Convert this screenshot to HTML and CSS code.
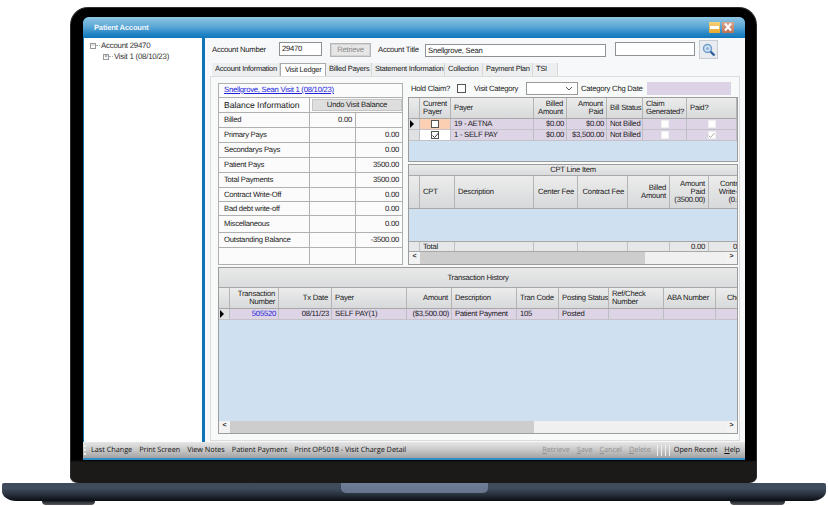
FILE: index.html
```html
<!DOCTYPE html>
<html lang="en">
<head>
<meta charset="utf-8">
<title>Patient Account</title>
<link rel="stylesheet" href="styles.css">
</head>
<body>
<div class="laptop">
  <div class="lid">
    <div class="window">
      <div class="titlebar">
        <span class="title">Patient Account</span>
        <div class="winbtns">
          <span class="winbtn min"><span class="dash"></span></span>
          <span class="winbtn close"><svg width="12" height="10" viewBox="0 0 12 10"><path d="M3 1.5 L9 8.5 M9 1.5 L3 8.5" stroke="#fff" stroke-width="2"/></svg></span>
        </div>
      </div>
      <div class="client">
        <div class="tree">
          <div class="node"><span class="box">−</span><span class="dots"></span>Account 29470</div>
          <div class="node sub"><span class="box">+</span><span class="dots"></span>Visit 1 (08/10/23)</div>
        </div>
        <div class="main">
          <div class="toprow">
            <span class="lbl w67">Account Number</span>
            <span class="input acct">29470</span>
            <span class="btn">Retrieve</span>
            <span class="lbl w47">Account Title</span>
            <span class="input title-in">Snellgrove, Sean</span>
            <span class="input search"></span>
            <span class="searchbtn"><svg width="14" height="14" viewBox="0 0 14 14"><circle cx="5.5" cy="5.5" r="4" fill="#cfe3f5" stroke="#6f9cc8" stroke-width="1.5"/><circle cx="5.5" cy="5.5" r="1.6" fill="#8fb4d8"/><path d="M8.5 8.5 L12.5 12.5" stroke="#2f5f9a" stroke-width="2.4"/></svg></span>
          </div>
          <div class="tabs">
            <span class="tab t1">Account Information</span>
            <span class="tab t2 active">Visit Ledger</span>
            <span class="tab t3">Billed Payers</span>
            <span class="tab t4">Statement Information</span>
            <span class="tab t5">Collection</span>
            <span class="tab t6">Payment Plan</span>
            <span class="tab t7">TSI</span>
          </div>
          <div class="panel">
            <div class="upper">
              <div class="balance">
                <div class="linkrow"><a href="#">Snellgrove, Sean Visit 1 (08/10/23)</a></div>
                <div class="brow head"><span class="bh">Balance Information</span><span class="undo-cell"><span class="undo">Undo Visit Balance</span></span></div>
                <div class="brow"><span>Billed</span><span class="r">0.00</span><span></span></div>
                <div class="brow"><span>Primary Pays</span><span></span><span class="r">0.00</span></div>
                <div class="brow"><span>Secondarys Pays</span><span></span><span class="r">0.00</span></div>
                <div class="brow"><span>Patient Pays</span><span></span><span class="r">3500.00</span></div>
                <div class="brow"><span>Total Payments</span><span></span><span class="r">3500.00</span></div>
                <div class="brow h14"><span>Contract Write-Off</span><span></span><span class="r">0.00</span></div>
                <div class="brow h14"><span>Bad debt write-off</span><span></span><span class="r">0.00</span></div>
                <div class="brow tall"><span>Miscellaneous</span><span></span><span class="r">0.00</span></div>
                <div class="brow"><span>Outstanding Balance</span><span></span><span class="r">-3500.00</span></div>
                <div class="brow last"><span></span><span></span><span></span></div>
              </div>
              <div class="rightcol">
                <div class="holdrow">
                  <span class="lbl w46">Hold Claim?</span>
                  <span class="cb big"></span>
                  <span class="lbl w52">Visit Category</span>
                  <span class="combo"><svg width="8" height="5" viewBox="0 0 8 5"><path d="M1 1 L4 4 L7 1" fill="none" stroke="#555"/></svg></span>
                  <span class="lbl w66">Category Chg Date</span>
                  <span class="datebox"></span>
                </div>
                <div class="grid payers">
                  <div class="gr hdr">
                    <span></span><span><span>Current<br>Payer</span></span><span>Payer</span><span class="r"><span>Billed<br>Amount</span></span><span class="r"><span>Amount<br>Paid</span></span><span>Bill Status</span><span><span>Claim<br>Generated?</span></span><span>Paid?</span>
                  </div>
                  <div class="gr row">
                    <span class="sel"><i class="arrow"></i></span><span class="cen cur"><span class="cb"></span></span><span>19 - AETNA</span><span class="r">$0.00</span><span class="r">$0.00</span><span>Not Billed</span><span class="cen"><span class="cb flat"></span></span><span class="cen"><span class="cb flat"></span></span>
                  </div>
                  <div class="gr row">
                    <span class="sel"></span><span class="cen plain"><span class="cb"><svg width="9" height="9" viewBox="0 0 9 9"><path d="M1.5 4.5 L3.5 6.5 L7.5 2" fill="none" stroke="#333"/></svg></span></span><span>1 - SELF PAY</span><span class="r">$0.00</span><span class="r">$3,500.00</span><span>Not Billed</span><span class="cen"><span class="cb flat"></span></span><span class="cen"><span class="cb flat"><svg width="9" height="9" viewBox="0 0 9 9"><path d="M1.5 4.5 L3.5 6.5 L7.5 2" fill="none" stroke="#aaa"/></svg></span></span>
                  </div>
                  <div class="blue"></div>
                </div>
                <div class="grid cpt">
                  <div class="caption">CPT Line Item</div>
                  <div class="gc hdr">
                    <span></span><span>CPT</span><span>Description</span><span class="r">Center Fee</span><span class="r">Contract Fee</span><span class="r"><span>Billed<br>Amount</span></span><span class="r"><span>Amount<br>Paid<br>(3500.00)</span></span><span class="r"><span>Contract<br>Write-Off<br>(0.00)</span></span>
                  </div>
                  <div class="blue"></div>
                  <div class="gc total">
                    <span></span><span>Total</span><span></span><span></span><span></span><span></span><span class="r">0.00</span><span class="r">0.00</span>
                  </div>
                  <div class="scroll"><span class="sbtn">&lt;</span><span class="thumb t-cpt"></span><span class="sbtn">&gt;</span></div>
                </div>
              </div>
            </div>
            <div class="grid history">
              <div class="caption big">Transaction History</div>
              <div class="gh hdr">
                <span></span><span class="r"><span>Transaction<br>Number</span></span><span class="r">Tx Date</span><span>Payer</span><span class="r">Amount</span><span>Description</span><span>Tran Code</span><span>Posting Status</span><span><span>Ref/Check<br>Number</span></span><span>ABA Number</span><span class="cut">Check</span>
              </div>
              <div class="gh row">
                <span class="sel"><i class="arrow"></i></span><span class="r txn">505520</span><span class="r">08/11/23</span><span>SELF PAY(1)</span><span class="r">($3,500.00)</span><span>Patient Payment</span><span>105</span><span>Posted</span><span></span><span></span><span></span>
              </div>
              <div class="blue"></div>
              <div class="scroll"><span class="sbtn">&lt;</span><span class="thumb t-hist"></span><span class="sbtn">&gt;</span></div>
            </div>
          </div>
        </div>
      </div>
      <div class="statusbar">
        <span class="grip"></span>
        <span class="sitem">Last Change</span>
        <span class="sitem">Print Screen</span>
        <span class="sitem">View Notes</span>
        <span class="sitem">Patient Payment</span>
        <span class="sitem">Print OP5018 - Visit Charge Detail</span>
        <span class="spacer"></span>
        <span class="sitem off"><u>R</u>etrieve</span>
        <span class="sitem off"><u>S</u>ave</span>
        <span class="sitem off"><u>C</u>ancel</span>
        <span class="sitem off"><u>D</u>elete</span>
        <span class="bars"><i></i><i></i><i></i><i></i></span>
        <span class="sitem">Open Recent</span>
        <span class="sitem"><u>H</u>elp</span>
      </div>
    </div>
  </div>
  <div class="base">
    <div class="notch"></div>
  </div>
  <div class="feet"><span class="foot f1"></span><span class="foot f2"></span></div>
</div>
</body>
</html>
```
FILE: styles.css
```css
* { box-sizing: border-box; }
html, body { margin: 0; padding: 0; background: #fff; }
body { width: 828px; height: 506px; overflow: hidden; font: 7.7px "Liberation Sans", Arial, sans-serif; letter-spacing: -.25px; text-rendering: geometricPrecision; color: #1a1a1a; }
.laptop { width: 828px; padding-top: 7px; }
.lid { width: 687px; height: 476px; margin-left: 70px; padding: 10px 11px 0 12px; background: linear-gradient(#000 0, #000 452px, #1b1a19 454px); border-radius: 18px 18px 8px 8px / 18px 18px 6px 6px; border: 1px solid #2a2c2e; border-bottom: 0; }
.window { width: 662px; height: 443px; display: flex; flex-direction: column; background: #0f74b8; border-radius: 6px 6px 0 0; overflow: hidden; margin-top: -1px; border-bottom: 2px solid #2f8cc6; }
.titlebar { height: 21px; flex: none; display: flex; align-items: center; justify-content: space-between; padding: 0 11px 0 11px; background: linear-gradient(#90c7e4 0, #5ea8d6 45%, #2b8ac8 75%, #0f76ba 100%); }
.title { color: #eef6fb; font: bold 7.6px "Liberation Sans", sans-serif; letter-spacing: -.2px; }
.winbtns { display: flex; gap: 2px; margin-top: -1px; }
.winbtn { width: 11px; height: 11px; display: flex; align-items: center; justify-content: center; }
.min { background: linear-gradient(#f6d27a, #e9a92f); }
.dash { width: 9px; height: 3px; background: #fff; }
.close { background: linear-gradient(#dda78e, #bd6f52); width: 12px; }
.client { flex: 1; display: flex; min-height: 0; }
.tree { width: 118px; margin-left: 1px; background: #fff; padding: 2px 6px; flex: none; font-size: 7.9px; color: #333; }
.node { height: 11px; display: flex; align-items: center; }
.node.sub { margin-left: 13px; }
.box { width: 6px; height: 6px; border: 1px solid #999; font-size: 6px; line-height: 4px; text-align: center; color: #555; flex: none; overflow: hidden; }
.dots { width: 4px; border-top: 1px dotted #aaa; margin-right: 1px; flex: none; }
.main { width: 540px; margin-left: 3px; background: #f7f8f9; padding: 0 0 0 7px; display: flex; flex-direction: column; }
.toprow { height: 25px; flex: none; display: flex; align-items: flex-start; padding-top: 4px; }
.lbl { white-space: nowrap; flex: none; }
.toprow .lbl { margin-top: 3px; }
.w67 { width: 67px; }
.w47 { width: 47px; }
.w46 { width: 46px; }
.w52 { width: 52px; }
.w66 { width: 66px; }
.input { height: 14px; background: #fff; border: 1px solid #8e9295; padding: 0 2px; line-height: 11px; flex: none; }
.acct { width: 43px; }
.btn { width: 41px; height: 14px; margin: 1px 7px 0 8px; background: #e6e6e6; border: 1px solid #b6b6b6; outline: 1px solid #d4d4d4; outline-offset: -2px; color: #8a8a8a; text-align: center; line-height: 12px; }
.title-in { width: 181px; height: 13px; margin-top: 2px; margin-right: 9px; }
.search { width: 80px; margin-right: 4px; }
.searchbtn { width: 19px; height: 19px; background: #e8ecf0; border: 1px solid #c6ccd0; display: flex; align-items: center; justify-content: center; margin-top: -2px; }
.tabs { height: 13px; flex: none; display: flex; align-items: flex-end; font-size: 7.5px; }
.tab { height: 13px; background: #eceef0; padding-left: 3px; line-height: 12px; border-right: 1px solid #d8d8d8; white-space: nowrap; overflow: hidden; flex: none; }
.tab.active { background: #fff; border: 1px solid #aaa; border-bottom: 0; line-height: 11px; padding-left: 4px; }
.t1 { width: 68px; } .t2 { width: 46px; } .t3 { width: 46px; } .t4 { width: 73px; } .t5 { width: 38px; } .t6 { width: 50px; } .t7 { width: 25px; }
.panel { width: 530px; height: 365px; margin-left: -2px; background: #f8f9f9; border: 1px solid #dcdcdc; padding: 4px 0 0 7px; display: flex; flex-direction: column; gap: 2px; }
.upper { display: flex; gap: 5px; height: 184px; flex: none; }
.balance { width: 185px; margin-top: 2px; height: 182px; border: 1px solid #b0b0b0; background: #fbfbfb; display: flex; flex-direction: column; }
.linkrow { height: 14px; padding-left: 5px; line-height: 12px; border-bottom: 1px solid #b0b0b0; flex: none; }
.linkrow a { color: #2222dd; }
.brow { height: 15px; flex: none; display: grid; grid-template-columns: 91px 46px 1fr; border-bottom: 1px solid #b0b0b0; align-items: stretch; line-height: 14px; }
.brow > span { border-right: 1px solid #b0b0b0; padding: 0 3px 0 5px; white-space: nowrap; }
.brow > span:last-child { border-right: 0; }
.brow.head { grid-template-columns: 91px 1fr; }
.brow.h14 { height: 14px; line-height: 13px; }
.brow.tall { height: 17px; line-height: 16px; }
.brow.last { height: 17px; border-bottom: 0; }
.bh { font-size: 8.6px; letter-spacing: -.05px; }
.brow .undo-cell { padding: 1px 0 1px 2px; }
.undo { display: block; height: 12px; background: #dedede; border: 1px solid #c4c4c4; text-align: center; line-height: 10px; }
.r { text-align: right; }
.rightcol { width: 330px; display: flex; flex-direction: column; }
.holdrow { height: 14px; margin-bottom: 2px; flex: none; display: flex; align-items: center; padding-left: 3px; }
.cb { width: 8px; height: 8px; border: 1px solid #555; background: #fff; display: flex; align-items: center; justify-content: center; flex: none; }
.cb svg { flex: none; }
.cb.big { width: 9px; height: 9px; margin: 0 8px 0 0; }
.cb.flat { border-color: #eee; }
.combo { width: 52px; height: 13px; margin-right: 3px; background: #fff; border: 1px solid #999; display: flex; justify-content: flex-end; align-items: center; padding-right: 4px; flex: none; }
.datebox { width: 84px; height: 13px; background: #dcd3e6; flex: none; }
.grid { border: 1px solid #9c9c9c; background: #cfe0f1; display: flex; flex-direction: column; overflow: hidden; flex: none; }
.payers { width: 330px; height: 65px; }
.cpt { width: 330px; height: 101px; margin-top: 2px; }
.history { width: 520px; height: 167px; }
.blue { flex: 1; background: #cfe0f1; min-height: 0; }
.gr, .gc, .gh { display: grid; flex: none; }
.gr { grid-template-columns: 11px 31px 83px 33px 40px 36px 44px 50px; }
.gc { grid-template-columns: 11px 35px 79px 44px 50px 42px 39px 42px; }
.gh { grid-template-columns: 11px 49px 53px 75px 45px 65px 42px 50px 55px 52px 23px; }
.hdr { background: linear-gradient(#ececec, #d7d9da); border-bottom: 1px solid #a8a8a8; }
.hdr > span { display: flex; align-items: center; border-right: 1px solid #b4b4b4; padding: 0 3px; line-height: 8.3px; white-space: nowrap; overflow: hidden; }
.hdr > span.r { justify-content: flex-end; text-align: right; }
.gr.hdr { height: 21px; }
.gc.hdr { height: 33px; }
.gh.hdr { height: 21px; }
.row { background: #ddd4e6; }
.gr.row, .gh.row { height: 11px; border-bottom: 1px solid #c2c2c8; }
.row > span { border-right: 1px solid #bdbdc4; padding: 0 2px 0 3px; line-height: 10px; white-space: nowrap; overflow: hidden; }
.row > .sel { background: #dfe1e2; padding: 0; display: flex; align-items: center; }
.arrow { display: block; width: 0; height: 0; border-left: 4px solid #000; border-top: 4px solid transparent; border-bottom: 4px solid transparent; margin-left: 1px; }
.cen { display: flex; align-items: center; justify-content: center; }
.row > .cen { padding: 0; }
.cur { background: #fbcfb2; }
.plain { background: #fff; }
.txn { color: #2222dd; }
.caption { height: 11px; flex: none; background: linear-gradient(#e9e9e9, #dadcdd); border-bottom: 1px solid #a8a8a8; text-align: center; line-height: 10px; }
.caption.big { height: 20px; line-height: 19px; }
.total { height: 11px; background: #e6e7e8; border-top: 1px solid #a8a8a8; border-bottom: 1px solid #a8a8a8; line-height: 9px; }
.total > span { border-right: 1px solid #c0c0c0; padding: 0 3px; white-space: nowrap; overflow: hidden; }
.scroll { height: 12px; flex: none; background: #f0f0f0; display: flex; justify-content: space-between; align-items: stretch; }
.sbtn { width: 11px; background: #f2f2f2; text-align: center; line-height: 10px; font-weight: bold; font-size: 7px; flex: none; }
.thumb { flex: none; background: #cdcdcd; }
.t-cpt { width: 225px; margin-right: auto; }
.t-hist { width: 304px; margin-right: auto; }
.gh.hdr > span.cut { padding-left: 11px; border-right: 0; }
.statusbar { height: 16px; flex: none; display: flex; align-items: center; gap: 7px; padding: 0 5px 0 1px; background: linear-gradient(#e6e6e6 0, #cbcbcb 45%, #a3a3a3 100%); font: 7.3px "Open Sans", sans-serif; letter-spacing: -.03px; color: #111; }
.grip { width: 3px; height: 10px; border-left: 2px dotted #eee; margin-right: -3px; }
.spacer { flex: 1; }
.off { color: #8f8f8f; }
.bars { display: flex; gap: 3px; height: 11px; margin: 0 -3px 0 -1px; }
.bars i { width: 1px; background: #eee; display: block; }
.base { width: 824px; height: 18px; margin-left: 2px; display: flex; justify-content: center; background: linear-gradient(#3f4a5a 0, #3f4c5e 30%, #2b3440 60%, #12171f 90%, #0b0e13 100%); border-radius: 2px 2px 14px 14px / 2px 2px 10px 10px; }
.notch { width: 147px; height: 10px; background: linear-gradient(#6f7f99, #66748b); border-radius: 0 0 5px 5px; }
.feet { display: flex; padding: 0 43px 0 42px; justify-content: space-between; }
.foot { height: 4px; background: linear-gradient(#1c2027, #565b62); border-radius: 0 0 6px 6px; }
.f1 { width: 53px; }
.f2 { width: 55px; }
```
